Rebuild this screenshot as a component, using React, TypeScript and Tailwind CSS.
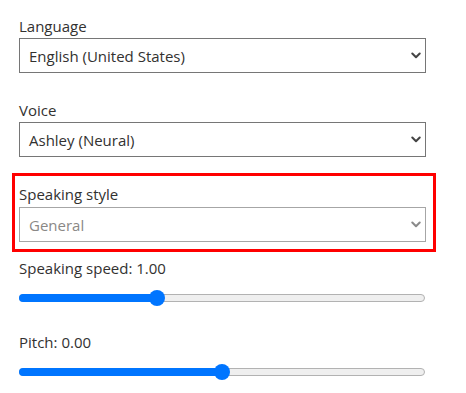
import React from "react";

function Chevron({ color }: { color: string }) {
  return (
    <svg width="10" height="7" viewBox="0 0 10 7" className="shrink-0">
      <path d="M1.3 1.5 L5 5.2 L8.7 1.5" fill="none" stroke={color} strokeWidth="2" strokeLinecap="round" strokeLinejoin="round" />
    </svg>
  );
}

function Select({ value, disabled }: { value: string; disabled?: boolean }) {
  return (
    <div
      className={
        "flex h-[35px] w-[407px] items-center justify-between border bg-white pl-[9px] pr-[4px] " +
        (disabled ? "border-[#a6a6a6] text-[#8a8886]" : "border-[#767676] text-[#323130]")
      }
    >
      <span className="text-[15px] leading-[22px]">{value}</span>
      <Chevron color={disabled ? "#8a8a8a" : "#444444"} />
    </div>
  );
}

function Slider({ fraction }: { fraction: number }) {
  const center = 8 + fraction * 390;
  return (
    <div className="relative h-[16px] w-[406px]">
      <div className="absolute left-0 right-0 top-[4px] h-[8px] rounded-full border border-[#b2b2b2] bg-[#efefef]" />
      <div className="absolute left-0 top-[4px] h-[8px] rounded-l-full bg-[#0075ff]" style={{ width: `${center}px` }} />
      <div
        className="absolute top-0 h-[16px] w-[16px] rounded-full bg-[#0075ff]"
        style={{ left: `${center - 8}px` }}
      />
    </div>
  );
}

export default function App() {
  return (
    <div
      className="h-[393px] w-[466px] bg-white pl-[19px] pt-[15px] text-[#323130]"
      style={{ fontFamily: '"Open Sans", "Noto Sans", sans-serif' }}
    >
      <div className="text-[15px] leading-[22px]">Language</div>
      <div className="mt-[1px]">
        <Select value="English (United States)" />
      </div>
      <div className="mt-[26px] text-[15px] leading-[22px]">Voice</div>
      <div className="mt-[1px]">
        <Select value="Ashley (Neural)" />
      </div>
      <div className="-ml-[7px] mt-[16px] w-[424px] border-[3px] border-[#ff0000] pb-[7px] pl-[4px] pt-[7px]">
        <div className="text-[15px] leading-[22px]">Speaking style</div>
        <div className="mt-[2px]">
          <Select value="General" disabled />
        </div>
      </div>
      <div className="mt-[5px] text-[15px] leading-[22px]">Speaking speed: 1.00</div>
      <div className="mt-[11px]">
        <Slider fraction={0.333} />
      </div>
      <div className="mt-[25px] text-[15px] leading-[22px]">Pitch: 0.00</div>
      <div className="mt-[11px]">
        <Slider fraction={0.5} />
      </div>
    </div>
  );
}
